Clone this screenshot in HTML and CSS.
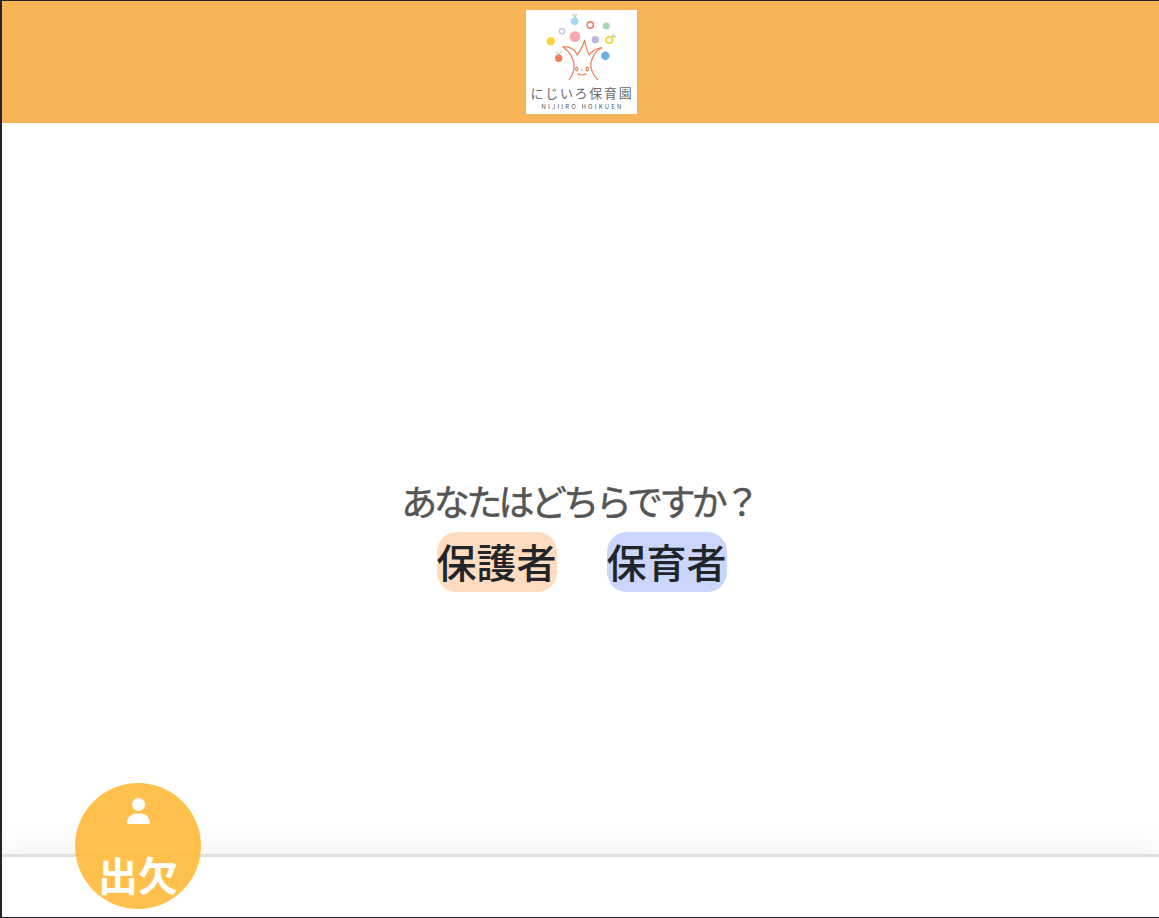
FILE: index.html
```html
<!DOCTYPE html>
<html lang="ja">
<head>
    <meta charset="UTF-8">
    <meta name="viewport" content="width=device-width, initial-scale=1.0">
    <title>にじいろ保育園</title>
    <link rel="stylesheet" href="styles.css">
</head>
<body>
    <header class="site-header">
        <svg class="logo" viewBox="0 0 111 104" role="img" aria-label="にじいろ保育園">
            <rect width="111" height="104" fill="#fff"/>
            <path class="leaf" d="M48.700 7.500 47 4M48.700 7.500 50.600 4"/>
            <circle cx="48.700" cy="11.300" r="3.800" fill="#a5d8f0"/>
            <circle cx="64.300" cy="15" r="3.100" fill="none" stroke="#ee8672" stroke-width="1.600"/>
            <circle cx="80.300" cy="16" r="3.500" fill="#a9d8ae"/>
            <circle cx="36" cy="21.300" r="2.600" fill="none" stroke="#c3bce0" stroke-width="1.300"/>
            <circle cx="49" cy="26.700" r="5.400" fill="#f5a9ac"/>
            <circle cx="69.300" cy="29.700" r="3.700" fill="#c0b4e0"/>
            <circle cx="83.300" cy="30" r="3.200" fill="none" stroke="#f9d33f" stroke-width="1.700"/>
            <path class="leaf" d="M86 26.500 88 24M86.500 27 90 26"/>
            <circle cx="24.700" cy="31.300" r="4.100" fill="#fbd43c"/>
            <path class="leaf" d="M32.700 44.600 30 41.500M32.700 44.600 35.500 41.500"/>
            <circle cx="32.700" cy="48.300" r="3.700" fill="#ee7f5c"/>
            <circle cx="79.300" cy="45.700" r="4.200" fill="#6aafe6"/>
            <path class="tree" d="M36.700 36.700C42 36.500 48 37.500 51.300 45C54 41 57 36 58.700 30C59.500 36 61 41 63.300 45C66 41 70 38.500 75.700 37.700"/>
            <path class="tree" d="M36.700 36.700C42 40 46 45 48 53.300C48.500 60 47 65 43 70"/>
            <path class="tree" d="M75.700 37.700C70 40.500 66.500 46 64.700 53.300C64.500 60 67 65 72 70"/>
            <ellipse class="tree" cx="50.700" cy="59" rx="1.100" ry="1.900"/>
            <ellipse class="tree" cx="61.300" cy="59" rx="1.100" ry="1.900"/>
            <path class="tree" d="M51.500 63.500C54 65.500 58 65.500 60.500 63.500"/>
            <circle cx="55.800" cy="60" r=".7" fill="#ec7c58"/>
            <text class="logo-ja" x="4.500" y="88">にじいろ保育園</text>
            <text class="logo-en" x="15.500" y="98.500">NIJIIRO HOIKUEN</text>
        </svg>
    </header>

    <main class="content">
        <p class="question">あなたはどちらですか？</p>
        <div class="choices">
            <a class="choice choice-parent" href="#">保護者</a>
            <a class="choice choice-teacher" href="#">保育者</a>
        </div>
    </main>

    <footer class="site-footer">
        <a class="attendance" href="#">
            <svg class="attendance-icon" viewBox="0 0 448 512" aria-hidden="true">
                <path fill="#fff" d="M224 256A128 128 0 1 0 224 0a128 128 0 1 0 0 256zm-45.700 48C79.800 304 0 383.800 0 482.300C0 498.700 13.300 512 29.700 512H418.300c16.400 0 29.700-13.300 29.700-29.700C448 383.800 368.200 304 269.700 304H178.300z"/>
            </svg>
            <span class="attendance-label">出欠</span>
        </a>
    </footer>
</body>
</html>
```

FILE: styles.css
```css
* {
    box-sizing: border-box;
}
html,
body {
    height: 100%;
}
body {
    display: flex;
    flex-direction: column;
    margin: 0;
    border-style: solid;
    border-color: #212529;
    border-width: 1px 0 1px 2px;
    background: #fff;
    color: #212529;
    font-family: "Noto Sans CJK JP", "Noto Sans", sans-serif;
    overflow: hidden;
}
a {
    text-decoration: none;
    color: inherit;
}
.site-header {
    display: flex;
    justify-content: center;
    height: 122px;
    padding: 9px 0 0 2px;
    background: #f8b557;
}
.logo {
    display: block;
    width: 111px;
    height: 104px;
}
.leaf {
    fill: none;
    stroke: #8fc47f;
    stroke-width: 1;
}
.tree {
    fill: none;
    stroke: #ec7c58;
    stroke-width: 1.200;
}
.logo-ja {
    font-size: 13px;
    letter-spacing: 1.700px;
    fill: #6b6b6b;
}
.logo-en {
    font-size: 6px;
    letter-spacing: 2.200px;
    fill: #555;
}
.content {
    flex: 1;
    display: flex;
    flex-direction: column;
    align-items: center;
    padding: 350px 0 0 2px;
}
.question {
    margin: 0 5px 0 0;
    font-size: 36px;
    letter-spacing: -3.600px;
    line-height: 54px;
    color: #555;
    -webkit-text-stroke: .5px #555;
}
.choices {
    display: flex;
    gap: 50px;
    margin-top: 5px;
}
.choice {
    width: 120px;
    height: 60px;
    border-radius: 20px;
    font-size: 40px;
    font-weight: 500;
    line-height: 58px;
    text-align: center;
    white-space: nowrap;
}
.choice-parent {
    background: #ffdcc0;
}
.choice-teacher {
    background: #cbd6fd;
}
.site-footer {
    position: relative;
    height: 63px;
    border-top: 3px solid #dde1e4;
    background: #fff;
    box-shadow: 0 -8px 28px rgba(0, 0, 0, .05);
}
.attendance {
    position: absolute;
    left: 73px;
    top: -74px;
    width: 126px;
    height: 126px;
    display: flex;
    flex-direction: column;
    align-items: center;
    padding-top: 15px;
    border-radius: 50%;
    background: rgba(255, 186, 56, .9);
    color: #fff;
}
.attendance-icon {
    display: block;
    width: 23px;
    height: 26px;
}
.attendance-label {
    margin-top: 25px;
    font-size: 40px;
    font-weight: 700;
    line-height: 50px;
}
```
